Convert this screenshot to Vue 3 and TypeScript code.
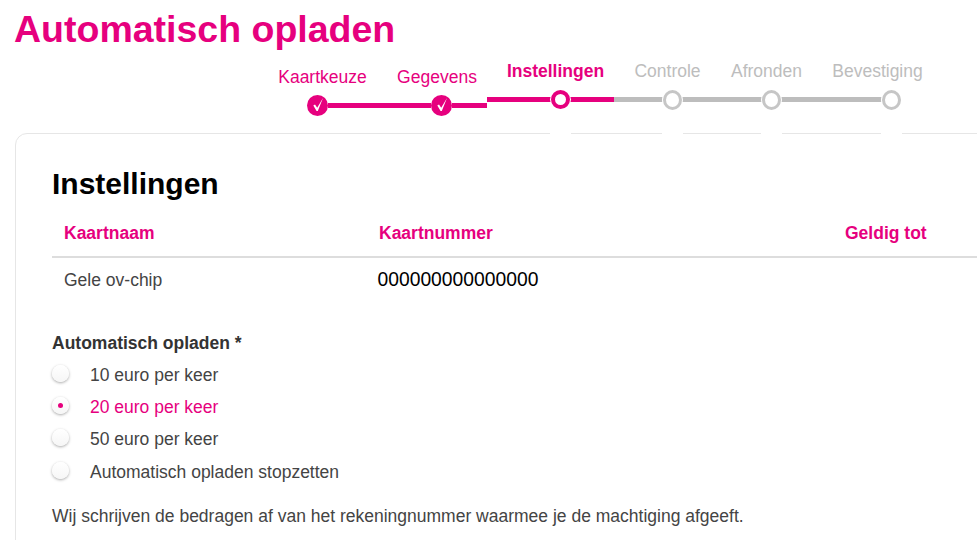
<script setup lang="ts">
interface Step {
  label: string
  state: 'done' | 'active' | 'todo'
  cls: string
}
const steps: Step[] = [
  { label: 'Kaartkeuze', state: 'done', cls: 's1' },
  { label: 'Gegevens', state: 'done', cls: 's2' },
  { label: 'Instellingen', state: 'active', cls: 's3' },
  { label: 'Controle', state: 'todo', cls: 's4' },
  { label: 'Afronden', state: 'todo', cls: 's5' },
  { label: 'Bevestiging', state: 'todo', cls: 's6' },
]
const options = [
  { label: '10 euro per keer', selected: false },
  { label: '20 euro per keer', selected: true },
  { label: '50 euro per keer', selected: false },
  { label: 'Automatisch opladen stopzetten', selected: false },
]
</script>

<template>
  <div class="page">
    <h1 class="title">Automatisch opladen</h1>
    <ol class="stepper">
      <li v-for="s in steps" :key="s.label" class="step" :class="[s.state, s.cls]">
        <span class="label">{{ s.label }}</span>
        <span class="track">
          <span class="line before"></span>
          <span class="dot">
            <svg v-if="s.state === 'done'" viewBox="0 0 21 21" width="21" height="21" aria-hidden="true">
              <path d="M6.3 10.6 L8 9.6 L10.2 12.8 L16 3 L10.8 16 L9.6 16 Z" fill="#fff" />
            </svg>
          </span>
          <span class="line after"></span>
        </span>
      </li>
    </ol>
    <section class="card">
      <h2 class="heading">Instellingen</h2>
      <div class="table">
        <div class="row head">
          <span>Kaartnaam</span>
          <span>Kaartnummer</span>
          <span>Geldig tot</span>
        </div>
        <div class="row body">
          <span>Gele ov-chip</span>
          <span class="number">000000000000000</span>
          <span></span>
        </div>
      </div>
      <fieldset class="group">
        <legend class="legend">Automatisch opladen *</legend>
        <label v-for="o in options" :key="o.label" class="option" :class="{ selected: o.selected }">
          <span class="radio"></span>
          <span>{{ o.label }}</span>
        </label>
      </fieldset>
      <p class="note">Wij schrijven de bedragen af van het rekeningnummer waarmee je de machtiging afgeeft.</p>
    </section>
  </div>
</template>

<style>
html, body { margin: 0; background: #fff; overflow: hidden; }
</style>

<style scoped>
.page {
  width: 977px;
  height: 540px;
  overflow: hidden;
  font-family: "Liberation Sans", Arial, sans-serif;
  color: #444;
  background: #fff;
}
.title {
  margin: 0;
  padding: 7px 0 0 14px;
  height: 47px;
  box-sizing: border-box;
  font-size: 37.5px;
  line-height: 44px;
  font-weight: 700;
  color: #e6007e;
}
.stepper {
  list-style: none;
  margin: 0;
  padding: 0 0 0 263px;
  display: grid;
  grid-template-columns: 119px 110px 127px 97px 101px 121px;
  height: 86px;
}
.step {
  display: flex;
  flex-direction: column;
  align-items: center;
  font-size: 17.5px;
  line-height: 22px;
  white-space: nowrap;
}
.label { display: block; margin-top: 13px; }
.done .label { margin-top: 19px; color: #e6007e; }
.active .label { font-weight: 700; color: #e6007e; }
.todo .label { color: #bdbdbd; }

.track {
  align-self: stretch;
  display: flex;
  align-items: center;
  height: 21px;
  margin-top: 7px;
}
.line { display: block; height: 5px; }
.done .line, .active .line { background: #e6007e; }
.todo .line { background: #bdbdbd; }
.dot {
  position: relative;
  flex: none;
  box-sizing: border-box;
  width: 19px;
  height: 20px;
  border-radius: 50%;
  background: #fff;
}
.done .dot { width: 21px; height: 21px; background: #e6007e; }
.active .dot { width: 19px; height: 19px; border: 4px solid #e6007e; box-shadow: 0 0 0 1px #fff; }
.todo .dot { border: 3px solid #c6c6c6; box-shadow: 0 0 0 1px #fff; }
.active .dot::after, .todo .dot::after {
  content: "";
  position: absolute;
  left: -5px;
  width: 21px;
  top: 30px;
  height: 12px;
  background: #fff;
  z-index: 2;
}
.todo .dot::after { left: -4px; top: 31px; }
.dot svg { display: block; }

.s1 .before { width: 44px; background: transparent; }
.s1 .after { flex: 1; }
.s2 .before { width: 49px; }
.s2 .after { flex: 1; margin-right: 5px; }
.s3 .track { margin-left: -5px; }
.s3 .before { width: 64px; }
.s3 .after { flex: 1; margin-right: 5px; }
.s4 .track { margin-left: -5px; }
.s4 .before { width: 49px; }
.s4 .after { flex: 1; }
.s5 .before { width: 46px; }
.s5 .after { flex: 1; }
.s6 .before { width: 65px; }
.s6 .after { display: none; }

.card {
  box-sizing: border-box;
  width: 1010px;
  margin-left: 15px;
  height: 440px;
  padding: 32px 36px 0;
  border: 1px solid #e6e6e6;
  border-radius: 12px;
  background: #fff;
}
.heading {
  margin: 0;
  font-size: 30px;
  line-height: 36px;
  font-weight: 700;
  color: #000;
}
.table { margin-top: 11px; }
.row {
  display: grid;
  grid-template-columns: 315px 466px 1fr;
}
.row > span { padding-left: 12px; }
.head {
  box-sizing: border-box;
  height: 45px;
  padding-bottom: 2px;
  align-items: center;
  border-bottom: 2px solid #ddd;
  font-size: 17.5px;
  font-weight: 700;
  color: #e6007e;
}
.body {
  box-sizing: border-box;
  height: 46px;
  padding-bottom: 2px;
  align-items: center;
  font-size: 17.5px;
}
.body .number { font-size: 19.3px; color: #000; padding-left: 10.5px; }
.group {
  margin: 27px 0 0;
  padding: 0;
  border: 0;
}
.legend {
  padding: 0 0 4px;
  font-size: 17.5px;
  line-height: 24px;
  font-weight: 700;
  color: #333;
}
.option {
  display: flex;
  align-items: center;
  gap: 21px;
  height: 32.3px;
  font-size: 17.5px;
  color: #444;
}
.option.selected { color: #e6007e; }
.radio {
  position: relative;
  flex: none;
  width: 17px;
  height: 17px;
  margin-top: -4px;
  border-radius: 50%;
  background: linear-gradient(#fff, #f6f6f6);
  box-shadow: 0 1px 3px rgba(0, 0, 0, .35);
}
.selected .radio::after {
  content: "";
  position: absolute;
  left: 6px;
  top: 6px;
  width: 5px;
  height: 5px;
  border-radius: 50%;
  background: #e6007e;
}
.note {
  margin: 16px 0 0;
  font-size: 17.5px;
  line-height: 24px;
  color: #444;
}
</style>
